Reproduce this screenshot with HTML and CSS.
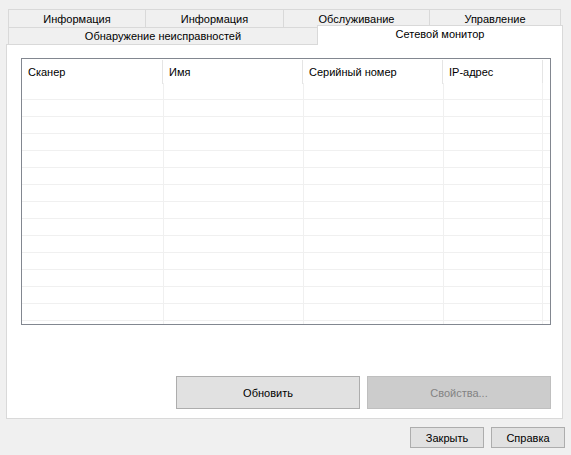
FILE: index.html
```html
<!DOCTYPE html>
<html lang="ru">
<head>
<meta charset="utf-8">
<title>Сетевой монитор</title>
<link rel="stylesheet" href="styles.css">
</head>
<body>
<div class="window">
  <div class="tabs">
    <div class="tabrow row1">
      <div class="tab w1">Информация</div>
      <div class="tab w2">Информация</div>
      <div class="tab w3">Обслуживание</div>
      <div class="tab w4 last">Управление</div>
    </div>
    <div class="tabrow row2">
      <div class="tab wide">Обнаружение неисправностей</div>
      <div class="tab selected">Сетевой монитор</div>
    </div>
  </div>
  <div class="panel">
    <div class="list">
      <div class="lhead">
        <div class="hc c1">Сканер</div>
        <div class="hc c2">Имя</div>
        <div class="hc c3">Серийный номер</div>
        <div class="hc c4">IP-адрес</div>
        <div class="hc c5"></div>
      </div>
      <div class="lbody">
        <div class="lrow"><div class="rc c1"></div><div class="rc c2"></div><div class="rc c3"></div><div class="rc c4"></div><div class="rc c5"></div></div>
        <div class="lrow"><div class="rc c1"></div><div class="rc c2"></div><div class="rc c3"></div><div class="rc c4"></div><div class="rc c5"></div></div>
        <div class="lrow"><div class="rc c1"></div><div class="rc c2"></div><div class="rc c3"></div><div class="rc c4"></div><div class="rc c5"></div></div>
        <div class="lrow"><div class="rc c1"></div><div class="rc c2"></div><div class="rc c3"></div><div class="rc c4"></div><div class="rc c5"></div></div>
        <div class="lrow"><div class="rc c1"></div><div class="rc c2"></div><div class="rc c3"></div><div class="rc c4"></div><div class="rc c5"></div></div>
        <div class="lrow"><div class="rc c1"></div><div class="rc c2"></div><div class="rc c3"></div><div class="rc c4"></div><div class="rc c5"></div></div>
        <div class="lrow"><div class="rc c1"></div><div class="rc c2"></div><div class="rc c3"></div><div class="rc c4"></div><div class="rc c5"></div></div>
        <div class="lrow"><div class="rc c1"></div><div class="rc c2"></div><div class="rc c3"></div><div class="rc c4"></div><div class="rc c5"></div></div>
        <div class="lrow"><div class="rc c1"></div><div class="rc c2"></div><div class="rc c3"></div><div class="rc c4"></div><div class="rc c5"></div></div>
        <div class="lrow"><div class="rc c1"></div><div class="rc c2"></div><div class="rc c3"></div><div class="rc c4"></div><div class="rc c5"></div></div>
        <div class="lrow"><div class="rc c1"></div><div class="rc c2"></div><div class="rc c3"></div><div class="rc c4"></div><div class="rc c5"></div></div>
        <div class="lrow"><div class="rc c1"></div><div class="rc c2"></div><div class="rc c3"></div><div class="rc c4"></div><div class="rc c5"></div></div>
        <div class="lrow"><div class="rc c1"></div><div class="rc c2"></div><div class="rc c3"></div><div class="rc c4"></div><div class="rc c5"></div></div>
        <div class="lrow"><div class="rc c1"></div><div class="rc c2"></div><div class="rc c3"></div><div class="rc c4"></div><div class="rc c5"></div></div>
        <div class="lrow"><div class="rc c1"></div><div class="rc c2"></div><div class="rc c3"></div><div class="rc c4"></div><div class="rc c5"></div></div>
      </div>
    </div>
    <div class="actions">
      <button class="btn big">Обновить</button>
      <button class="btn big disabled" disabled>Свойства...</button>
    </div>
  </div>
  <div class="footer">
    <button class="btn small">Закрыть</button>
    <button class="btn small">Справка</button>
  </div>
</div>
</body>
</html>
```

FILE: styles.css
```css
html, body {
  margin: 0;
  padding: 0;
}
body {
  background: #f0f0f0;
  font-family: "Liberation Sans", Arial, sans-serif;
  font-size: 11px;
  color: #000;
  width: 571px;
  height: 455px;
  overflow: hidden;
}
.window {
  padding: 9px 6px 0 6px;
}
.tabs {
  margin-left: 2px;
}
.tabrow {
  display: flex;
  align-items: flex-start;
}
.tab {
  box-sizing: border-box;
  border-top: 1px solid #d9d9d9;
  border-left: 1px solid #d9d9d9;
  background: #f0f0f0;
  text-align: center;
  white-space: nowrap;
}
.row1 {
  height: 18px;
}
.row1 .tab {
  height: 18px;
  line-height: 19px;
}
.w1 { width: 137px; }
.w2 { width: 138px; }
.w3 { width: 146px; }
.w4 { width: 132px; }
.tab.last {
  border-right: 1px solid #d9d9d9;
}
.row2 {
  height: 17px;
}
.row2 .wide {
  width: 309px;
  height: 17px;
  line-height: 17px;
}
.row2 .selected {
  width: 246px;
  height: 20px;
  margin-top: -2px;
  border-right: 1px solid #d9d9d9;
  background: #fff;
  line-height: 17px;
  position: relative;
  z-index: 1;
}
.panel {
  box-sizing: border-box;
  width: 557px;
  height: 375px;
  border: 1px solid #d9d9d9;
  background: #fff;
  padding: 13px 11px 0 14px;
}
.list {
  box-sizing: border-box;
  width: 530px;
  height: 267px;
  border: 1px solid #828790;
  background: #fff;
  overflow: hidden;
}
.lhead {
  display: flex;
  height: 24px;
}
.hc {
  box-sizing: border-box;
  height: 24px;
  margin-top: 1px;
  line-height: 24px;
  padding-left: 6px;
  border-right: 1px solid #e5e5e5;
  white-space: nowrap;
}
.c1 { width: 141px; }
.c2 { width: 140px; }
.c3 { width: 140px; }
.c4 { width: 100px; }
.c5 { flex: 1; }
.hc.c5, .rc.c5 {
  border-right: none;
}
.lrow {
  display: flex;
  box-sizing: border-box;
  height: 17px;
  border-bottom: 1px solid #f0f0f0;
}
.rc {
  box-sizing: border-box;
  height: 16px;
  border-right: 1px solid #f0f0f0;
}
.lbody .c1 { width: 142px; }
.lbody .c2 { width: 140px; }
.lbody .c3 { width: 140px; }
.lbody .c4 { width: 99px; }
.actions {
  display: flex;
  justify-content: flex-end;
  gap: 7px;
  margin-top: 51px;
  width: 530px;
}
.btn {
  box-sizing: border-box;
  font-family: "Liberation Sans", Arial, sans-serif;
  font-size: 11px;
  color: #000;
  background: #e1e1e1;
  border: 1px solid #adadad;
  border-radius: 0;
  padding: 0;
  margin: 0;
}
.btn.big {
  width: 184px;
  height: 33px;
}
.btn.disabled {
  background: #cccccc;
  border-color: #bfbfbf;
  color: #838383;
}
.footer {
  display: flex;
  justify-content: flex-end;
  gap: 7px;
  margin-top: 8px;
}
.btn.small {
  width: 74px;
  height: 21px;
}
```
